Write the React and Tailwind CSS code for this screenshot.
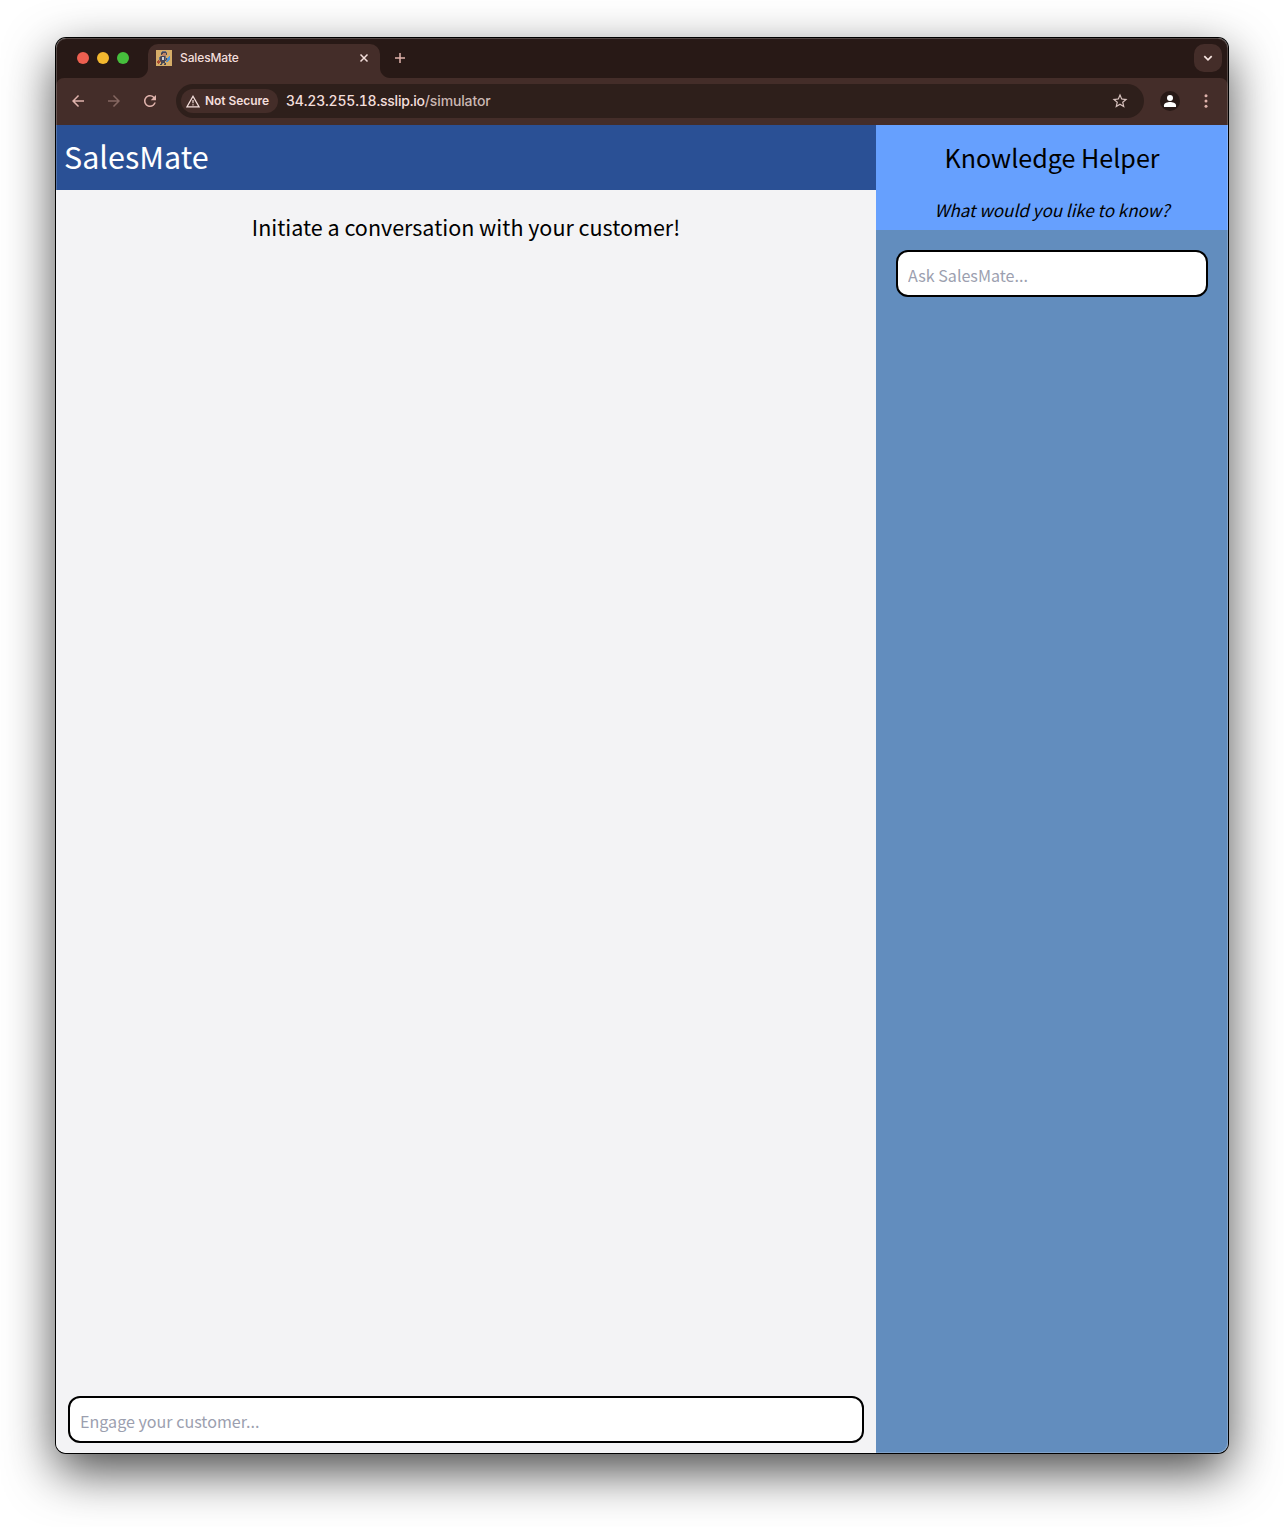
import React from "react";

const pageFont = "font-['Noto_Sans_CJK_KR','Noto_Sans_CJK_SC',sans-serif]";

const SPRITE = [
  "................",
  "......nnnn......",
  ".....nkkkkn.....",
  ".....kksssk.....",
  ".....kssssk.....",
  "......ssss......",
  "....nkkkkn...b..",
  "...nkkwwkn..bb..",
  "...nkkwwknkbbb..",
  "...nkkwwknkbbb..",
  "..rskkkkkksbb...",
  ".rrrrkkkk.bb....",
  ".rrr.kkkk.......",
  "..r..kn.nk......",
  "....kk..kk......",
  "................",
];
const SPRITE_COLORS = {
  k: "#474551",
  n: "#69707e",
  s: "#bb8566",
  w: "#cfd3da",
  b: "#4d91cf",
  r: "#ad4d32",
};

function Favicon() {
  return (
    <svg width="16" height="16" viewBox="0 0 16 16" className="shrink-0">
      <rect width="16" height="16" fill="#d5ad68" />
      {SPRITE.flatMap((row, y) =>
        row.split("").map((c, x) =>
          c === "." ? null : (
            <rect key={`${x}-${y}`} x={x} y={y} width="1" height="1" fill={SPRITE_COLORS[c]} />
          )
        )
      )}
    </svg>
  );
}

function MaterialIcon({ size = 16, d, className = "" }) {
  return (
    <svg width={size} height={size} viewBox="0 0 24 24" fill="currentColor" className={`shrink-0 ${className}`}>
      <path d={d} />
    </svg>
  );
}

function TabStrip() {
  return (
    <div className="flex h-10 items-start bg-[#281916] pr-1.5">
      <div className="flex w-[82px] gap-2 pt-3.5 pl-[21px]">
        <span className="size-3 shrink-0 rounded-full bg-[#ed5f50]" />
        <span className="size-3 shrink-0 rounded-full bg-[#f3b82f]" />
        <span className="size-3 shrink-0 rounded-full bg-[#46bf3c]" />
      </div>
      <div className="flex h-10 items-end">
        <svg width="10" height="10" viewBox="0 0 10 10" className="h-2.5 w-2.5">
          <path d="M10 0v10H0C5.500 10 10 5.500 10 0z" fill="#442d29" />
        </svg>
        <div className="flex h-[34px] w-[232px] items-center rounded-t-[10px] bg-[#442d29] pr-2.5 pb-1.5 pl-2">
          <Favicon />
          <span className="ml-2 flex-1 font-[Inter,sans-serif] text-[12px] leading-4 font-medium tracking-[-0.12px] text-[#f3dedb]">
            SalesMate
          </span>
          <svg width="12" height="12" viewBox="0 0 12 12" className="text-[#f3dedb]">
            <path d="M2.500 2.500l7 7M9.500 2.500l-7 7" stroke="currentColor" strokeWidth="1.500" />
          </svg>
        </div>
        <svg width="10" height="10" viewBox="0 0 10 10" className="h-2.5 w-2.5">
          <path d="M0 0v10h10C4.500 10 0 5.500 0 0z" fill="#442d29" />
        </svg>
      </div>
      <svg width="12" height="12" viewBox="0 0 12 12" className="mt-3.5 ml-1 text-[#e0b3ac]">
        <path d="M6 1v10M1 6h10" stroke="currentColor" strokeWidth="1.500" />
      </svg>
      <div className="mt-1.5 ml-auto flex size-7 items-center justify-center rounded-[10px] bg-[#442d29] text-[#f8e6e2]">
        <svg width="10" height="10" viewBox="0 0 10 10" fill="none">
          <path d="M1.300 3.200L5 6.800l3.700-3.600" stroke="currentColor" strokeWidth="1.700" />
        </svg>
      </div>
    </div>
  );
}

function Toolbar() {
  return (
    <div className="bg-[#281916]">
      <div className="flex h-[47px] items-center rounded-t-lg bg-[#442d29] px-3.5 pb-px text-[#e0b3ac]">
        <MaterialIcon d="M20 11H7.830l5.590-5.590L12 4l-8 8 8 8 1.410-1.410L7.830 13H20v-2z" size={18} className="-ml-px" />
        <MaterialIcon d="M12 4l-1.410 1.410L16.170 11H4v2h12.170l-5.580 5.590L12 20l8-8z" size={18} className="ml-[18px] text-[#856761]" />
        <MaterialIcon
          d="M17.650 6.350A7.958 7.958 0 0 0 12 4c-4.420 0-7.990 3.580-7.990 8s3.570 8 7.990 8c3.730 0 6.840-2.550 7.730-6h-2.080A5.990 5.990 0 0 1 12 18c-3.310 0-6-2.690-6-6s2.690-6 6-6c1.660 0 3.140.69 4.220 1.780L13 11h7V4l-2.350 2.350z"
          size={18}
          className="ml-[18px]"
        />
        <div className="ml-[17px] flex h-[34px] flex-1 items-center rounded-full bg-[#2e1f1b] pr-4 pl-[5px]">
          <div className="flex h-6 w-[97px] items-center rounded-full bg-[#442d29] pl-[5px] text-[#f3dedb]">
            <svg width="14" height="13" viewBox="0 0 14 13" fill="none" className="shrink-0">
              <path d="M7 1.300L13.100 11.900H.9z" stroke="currentColor" strokeWidth="1.300" />
              <path d="M7 5v3.300M7 9.200v1.300" stroke="currentColor" strokeWidth="1.200" />
            </svg>
            <span className="ml-[5px] font-[Inter,sans-serif] text-[12px] font-semibold tracking-[-0.04px] whitespace-nowrap">Not Secure</span>
          </div>
          <span className="ml-2 flex-1 font-[Inter,sans-serif] text-[14px] leading-5 font-[450] tracking-[-0.140px] text-[#f3dedb]">
            <span className="tracking-[-0.210px] tabular-nums">34.23.255.18.sslip.io</span>
            <span className="text-[#cbb7b3]">/simulator</span>
          </span>
          <MaterialIcon
            d="M22 9.240l-7.190-.62L12 2 9.190 8.630 2 9.240l5.460 4.730L5.820 21 12 17.270 18.180 21l-1.630-7.030L22 9.240zM12 15.400l-3.760 2.270 1-4.280-3.320-2.880 4.380-.38L12 6.100l1.710 4.040 4.380.38-3.320 2.880 1 4.280L12 15.400z"
            size={18}
            className="-mr-px text-[#d8c2be]"
          />
        </div>
        <svg width="20" height="20" viewBox="0 0 20 20" className="ml-4">
          <circle cx="10" cy="10" r="10" fill="#281916" />
          <circle cx="10" cy="7" r="3" fill="#fff" />
          <path d="M4 16v-1.700C4 12 7.500 11 10 11s6 1 6 3.300V16z" fill="#fff" />
        </svg>
        <svg width="16" height="16" viewBox="0 0 16 16" fill="currentColor" className="ml-[18px]">
          <circle cx="8" cy="2.700" r="1.500" />
          <circle cx="8" cy="8" r="1.500" />
          <circle cx="8" cy="13.300" r="1.500" />
        </svg>
      </div>
    </div>
  );
}

function PromptInput({ placeholder }) {
  return (
    <input
      type="text"
      placeholder={placeholder}
      className="h-[47px] w-full rounded-xl border-2 border-black bg-white px-2.5 pt-0.5 text-[16.100px] text-black placeholder:text-[#9c9faf]"
    />
  );
}

export default function App() {
  return (
    <div className="h-[1527px] w-[1284px] overflow-hidden bg-white px-14 pt-[38px]">
      <div className="relative flex h-[1415px] w-[1172px] flex-col rounded-[10px] shadow-[0_0_0_1px_#000,0_18px_50px_rgba(0,0,0,0.72)]">
        <div className="flex flex-1 flex-col overflow-hidden rounded-[10px]">
          <TabStrip />
          <Toolbar />
          <div className={`flex flex-1 ${pageFont}`}>
            <main className="flex w-[820px] flex-col bg-[#f3f3f5]">
              <header className="h-[65px] bg-[#2a5095] px-2 pt-[7px] text-white">
                <h1 className="text-[30.500px] leading-[48px]">SalesMate</h1>
              </header>
              <p className="mt-[19px] flex-1 text-center text-[21.500px] leading-9 text-black">
                Initiate a conversation with your customer!
              </p>
              <div className="px-3 pb-2.5">
                <PromptInput placeholder="Engage your customer..." />
              </div>
            </main>
            <aside className="w-[352px] bg-[#628dbe] text-black">
              <div className="h-[105px] bg-[#66a0fe] pt-[11px] text-center">
                <h2 className="text-[25.100px] leading-[42px]">Knowledge Helper</h2>
                <p className="mt-[17px] text-[17px] leading-[30px] italic">What would you like to know?</p>
              </div>
              <div className="p-5">
                <PromptInput placeholder="Ask SalesMate..." />
              </div>
            </aside>
          </div>
        </div>
        <div className="pointer-events-none absolute inset-0 rounded-[10px] shadow-[inset_0_0_0_1px_rgba(255,255,255,0.2)]" />
      </div>
    </div>
  );
}
